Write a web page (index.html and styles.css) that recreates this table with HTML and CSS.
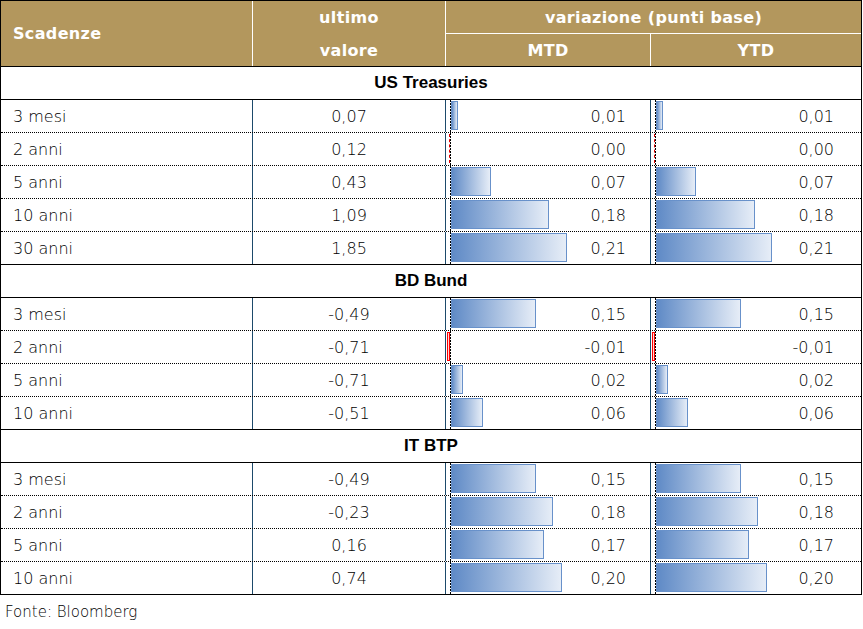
FILE: index.html
```html
<!DOCTYPE html>
<html lang="it">
<head>
<meta charset="utf-8">
<title>Scadenze</title>
<link rel="stylesheet" href="styles.css">
</head>
<body>
<div class="table">
  <div class="head">
    <div class="h-scad">Scadenze</div>
    <div class="h-ult"><span>ultimo</span><span>valore</span></div>
    <div class="h-var">variazione (punti base)</div>
    <div class="h-mtd">MTD</div>
    <div class="h-ytd">YTD</div>
  </div>

  <div class="section">US Treasuries</div>
  <div class="group">
    <div class="row"><div class="lab">3 mesi</div><div class="val">0,07</div>
      <div class="bc"><span class="neg"></span><span class="axis"></span><span class="bar" style="width:7px"></span><span class="num">0,01</span></div>
      <div class="bc ytd"><span class="neg"></span><span class="axis"></span><span class="bar" style="width:7px"></span><span class="num">0,01</span></div></div>
    <div class="row"><div class="lab">2 anni</div><div class="val">0,12</div>
      <div class="bc"><span class="neg zero"></span><span class="axis"></span><span class="num">0,00</span></div>
      <div class="bc ytd"><span class="neg zero"></span><span class="axis"></span><span class="num">0,00</span></div></div>
    <div class="row"><div class="lab">5 anni</div><div class="val">0,43</div>
      <div class="bc"><span class="neg"></span><span class="axis"></span><span class="bar" style="width:40px"></span><span class="num">0,07</span></div>
      <div class="bc ytd"><span class="neg"></span><span class="axis"></span><span class="bar" style="width:40px"></span><span class="num">0,07</span></div></div>
    <div class="row"><div class="lab">10 anni</div><div class="val">1,09</div>
      <div class="bc"><span class="neg"></span><span class="axis"></span><span class="bar" style="width:98px"></span><span class="num">0,18</span></div>
      <div class="bc ytd"><span class="neg"></span><span class="axis"></span><span class="bar" style="width:99px"></span><span class="num">0,18</span></div></div>
    <div class="row"><div class="lab">30 anni</div><div class="val">1,85</div>
      <div class="bc"><span class="neg"></span><span class="axis"></span><span class="bar" style="width:116px"></span><span class="num">0,21</span></div>
      <div class="bc ytd"><span class="neg"></span><span class="axis"></span><span class="bar" style="width:116px"></span><span class="num">0,21</span></div></div>
  </div>

  <div class="section">BD Bund</div>
  <div class="group">
    <div class="row"><div class="lab">3 mesi</div><div class="val">-0,49</div>
      <div class="bc"><span class="neg"></span><span class="axis"></span><span class="bar" style="width:85px"></span><span class="num">0,15</span></div>
      <div class="bc ytd"><span class="neg"></span><span class="axis"></span><span class="bar" style="width:85px"></span><span class="num">0,15</span></div></div>
    <div class="row"><div class="lab">2 anni</div><div class="val">-0,71</div>
      <div class="bc"><span class="neg minus"></span><span class="axis"></span><span class="num">-0,01</span></div>
      <div class="bc ytd"><span class="neg minus"></span><span class="axis"></span><span class="num">-0,01</span></div></div>
    <div class="row"><div class="lab">5 anni</div><div class="val">-0,71</div>
      <div class="bc"><span class="neg"></span><span class="axis"></span><span class="bar" style="width:12px"></span><span class="num">0,02</span></div>
      <div class="bc ytd"><span class="neg"></span><span class="axis"></span><span class="bar" style="width:12px"></span><span class="num">0,02</span></div></div>
    <div class="row"><div class="lab">10 anni</div><div class="val">-0,51</div>
      <div class="bc"><span class="neg"></span><span class="axis"></span><span class="bar" style="width:32px"></span><span class="num">0,06</span></div>
      <div class="bc ytd"><span class="neg"></span><span class="axis"></span><span class="bar" style="width:32px"></span><span class="num">0,06</span></div></div>
  </div>

  <div class="section">IT BTP</div>
  <div class="group">
    <div class="row"><div class="lab">3 mesi</div><div class="val">-0,49</div>
      <div class="bc"><span class="neg"></span><span class="axis"></span><span class="bar" style="width:85px"></span><span class="num">0,15</span></div>
      <div class="bc ytd"><span class="neg"></span><span class="axis"></span><span class="bar" style="width:85px"></span><span class="num">0,15</span></div></div>
    <div class="row"><div class="lab">2 anni</div><div class="val">-0,23</div>
      <div class="bc"><span class="neg"></span><span class="axis"></span><span class="bar" style="width:102px"></span><span class="num">0,18</span></div>
      <div class="bc ytd"><span class="neg"></span><span class="axis"></span><span class="bar" style="width:102px"></span><span class="num">0,18</span></div></div>
    <div class="row"><div class="lab">5 anni</div><div class="val">0,16</div>
      <div class="bc"><span class="neg"></span><span class="axis"></span><span class="bar" style="width:93px"></span><span class="num">0,17</span></div>
      <div class="bc ytd"><span class="neg"></span><span class="axis"></span><span class="bar" style="width:93px"></span><span class="num">0,17</span></div></div>
    <div class="row"><div class="lab">10 anni</div><div class="val">0,74</div>
      <div class="bc"><span class="neg"></span><span class="axis"></span><span class="bar" style="width:111px"></span><span class="num">0,20</span></div>
      <div class="bc ytd"><span class="neg"></span><span class="axis"></span><span class="bar" style="width:111px"></span><span class="num">0,20</span></div></div>
  </div>
</div>
<p class="source">Fonte: Bloomberg</p>
</body>
</html>
```

FILE: styles.css
```css
html, body {
  margin: 0;
  padding: 0;
  background: #fff;
}

body {
  font-family: "DejaVu Sans", "Liberation Sans", sans-serif;
  font-size: 16px;
  font-weight: 200;
  color: #000;
}

.table {
  width: 862px;
  box-sizing: border-box;
  border: 1px solid #000;
}

.head {
  display: grid;
  grid-template-columns: 251px 193px 205px 211px;
  grid-template-rows: 33px 32px;
  background: #b3975d;
  color: #fff;
  font-weight: bold;
  letter-spacing: 0.35px;
}

.head > div {
  box-sizing: border-box;
  display: flex;
  align-items: center;
  justify-content: center;
}

.h-scad {
  grid-row: 1 / 3;
  grid-column: 1;
  justify-content: flex-start !important;
  padding-left: 12px;
}

.h-ult {
  grid-row: 1 / 3;
  grid-column: 2;
  border-left: 1px solid #fff;
  flex-direction: column;
  align-items: stretch !important;
  justify-content: flex-start !important;
}

.h-ult span {
  display: flex;
  align-items: center;
  justify-content: center;
  height: 33px;
}

.h-ult span + span {
  height: 32px;
}

.h-var {
  grid-row: 1;
  grid-column: 3 / 5;
  border-left: 1px solid #fff;
  border-bottom: 1px solid #fff;
}

.h-mtd {
  grid-row: 2;
  grid-column: 3;
  border-left: 1px solid #fff;
}

.h-ytd {
  grid-row: 2;
  grid-column: 4;
  border-left: 1px solid #fff;
}

.section {
  height: 32px;
  border-top: 1px solid #000;
  border-bottom: 1px solid #000;
  display: flex;
  align-items: center;
  justify-content: center;
  font-family: "Liberation Sans", Arial, sans-serif;
  font-weight: bold;
  font-size: 17px;
}

.row {
  display: grid;
  grid-template-columns: 251px 193px 205px 211px;
  height: 32px;
}

.row + .row {
  border-top: 1px dotted #000;
}

.row > div {
  box-sizing: border-box;
  display: flex;
  align-items: center;
  height: 32px;
}

.lab {
  padding-left: 12px;
}

.val {
  border-left: 1px solid #1d4a6b;
  justify-content: center;
}

.bc {
  border-left: 1px solid #1d4a6b;
  padding-left: 1px;
  padding-right: 24px;
}

.bc.ytd {
  padding-right: 27px;
}

.neg {
  width: 3px;
  height: 29px;
  align-self: flex-start;
  margin-top: 1px;
  box-sizing: border-box;
  flex: none;
}

.neg.zero {
  border-right: 1px dashed #e00000;
}

.neg.minus {
  border: 1px solid #ff0000;
  background: #ffd6d6;
}

.axis {
  width: 1px;
  align-self: stretch;
  flex: none;
  background: repeating-linear-gradient(to bottom, #000 0 2px, transparent 2px 3px);
}

.bar {
  align-self: flex-start;
  margin-top: 1px;
  height: 29px;
  box-sizing: border-box;
  flex: none;
  border: 1px solid #6891ca;
  background: linear-gradient(to right, #5f8ac6, #e6edf7);
}

.num {
  margin-left: auto;
}

.source {
  margin: 8px 0 0;
  padding-left: 5px;
  font-size: 15px;
  line-height: 18px;
}
```
